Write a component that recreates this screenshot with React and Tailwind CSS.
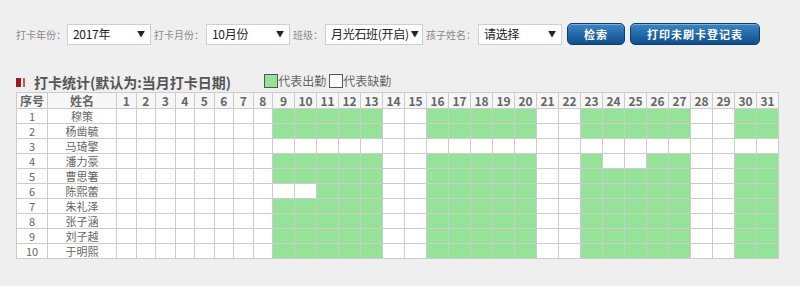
import React from 'react'

const font = { fontFamily: '"Noto Sans CJK SC", "Liberation Sans", sans-serif' }

const students = ['穆策', '杨凿毓', '马琦擎', '潘力豪', '曹思箸', '陈熙蕾', '朱礼泽', '张子涵', '刘子越', '于明熙']

const workDays = [9, 10, 11, 12, 13, 16, 17, 18, 19, 20, 23, 24, 25, 26, 27, 30, 31]

// which days are missing per row (index -> days)
const absent = {
  2: 'all',
  3: [24, 25],
  5: [9, 10],
}

function isPresent(row, day) {
  if (!workDays.includes(day)) return false
  const a = absent[row]
  if (a === 'all') return false
  if (a && a.includes(day)) return false
  return true
}

function Select({ value, width }) {
  return (
    <div
      className={`h-[21px] bg-white border border-[#cfcfcf] flex items-center justify-between pl-[5px] pr-[5px] text-[12px] text-[#222] whitespace-nowrap overflow-hidden ${width}`}
    >
      <span className="tracking-[-0.3px]">{value}</span>
      <span className="text-[8px] text-[#222] ml-[2px]">▼</span>
    </div>
  )
}

function Label({ children }) {
  return <span className="text-[10px] text-[#8a8a8a] pl-[3px] pr-[2px] whitespace-nowrap">{children}</span>
}

function Button({ children, width }) {
  return (
    <button
      className={`h-[22px] rounded-[5px] border border-[#0b3f6e] bg-gradient-to-b from-[#3b86c6] to-[#0f4f8c] text-white text-[11px] font-bold tracking-[1px] shadow-[inset_0_1px_0_rgba(255,255,255,0.35)] ${width}`}
    >
      {children}
    </button>
  )
}

export default function App() {
  const days = Array.from({ length: 31 }, (_, i) => i + 1)
  return (
    <div className="w-[800px] h-[286px] bg-[#efefef] pl-[16px] pt-[23px]" style={font}>
      {/* filter bar */}
      <div className="flex items-center">
        <span className="text-[10px] text-[#8a8a8a] pr-[1px] whitespace-nowrap">打卡年份：</span>
        <Select value="2017年" width="w-[84px]" />
        <Label>打卡月份：</Label>
        <Select value="10月份" width="w-[84px]" />
        <Label>班级：</Label>
        <Select value="月光石班(开启)" width="w-[98px]" />
        <Label>孩子姓名：</Label>
        <Select value="请选择" width="w-[84px]" />
        <div className="ml-[5px] flex gap-[5px]">
          <Button width="w-[58px]">检索</Button>
          <Button width="w-[130px]">打印未刷卡登记表</Button>
        </div>
      </div>

      {/* title + legend */}
      <div className="mt-[26px] flex items-end h-[20px]">
        <span className="flex items-center gap-[2px] mb-[4px]">
          <span className="w-[5px] h-[9px] bg-[#a31818]" />
          <span className="w-[2px] h-[9px] bg-[#c65a5a]" />
        </span>
        <span className="ml-[9px] text-[14px] font-bold text-[#555] leading-[18px]">打卡统计(默认为:当月打卡日期)</span>
        <span className="ml-[33px] flex items-end text-[12px] text-[#666] leading-[14px] mb-[3px]">
          <span className="w-[14px] h-[14px] bg-[#95e399] border border-[#555]" />
          <span>代表出勤</span>
          <span className="ml-[3px] w-[14px] h-[14px] bg-white border border-[#555]" />
          <span>代表缺勤</span>
        </span>
      </div>

      {/* table */}
      <table className="mt-[1px] border-collapse table-fixed w-[762px] bg-white text-center">
        <colgroup>
          <col className="w-[31px]" />
          <col className="w-[69px]" />
          {days.map((d) => (
            <col key={d} className={d <= 8 ? 'w-[19.5px]' : 'w-[22px]'} />
          ))}
        </colgroup>
        <thead>
          <tr className="bg-[#f6f6f6]">
            <th className="border border-[#cccccc] h-[16px] p-0 text-[12px] leading-[14px] font-bold text-[#666]">序号</th>
            <th className="border border-[#cccccc] h-[16px] p-0 text-[12px] leading-[14px] font-bold text-[#666]">姓名</th>
            {days.map((d) => (
              <th key={d} className="border border-[#cccccc] h-[16px] p-0 text-[12px] leading-[14px] font-bold text-[#666]">
                {d}
              </th>
            ))}
          </tr>
        </thead>
        <tbody>
          {students.map((name, i) => (
            <tr key={name}>
              <td className="border border-[#cccccc] h-[15px] p-0 text-[11px] leading-[13px] text-[#666]">{i + 1}</td>
              <td className="border border-[#cccccc] h-[15px] p-0 text-[11px] leading-[13px] text-[#666]">{name}</td>
              {days.map((d) => (
                <td
                  key={d}
                  className={`border border-[#cccccc] h-[15px] p-0 ${isPresent(i, d) ? 'bg-[#95e399]' : 'bg-white'}`}
                />
              ))}
            </tr>
          ))}
        </tbody>
      </table>
    </div>
  )
}
